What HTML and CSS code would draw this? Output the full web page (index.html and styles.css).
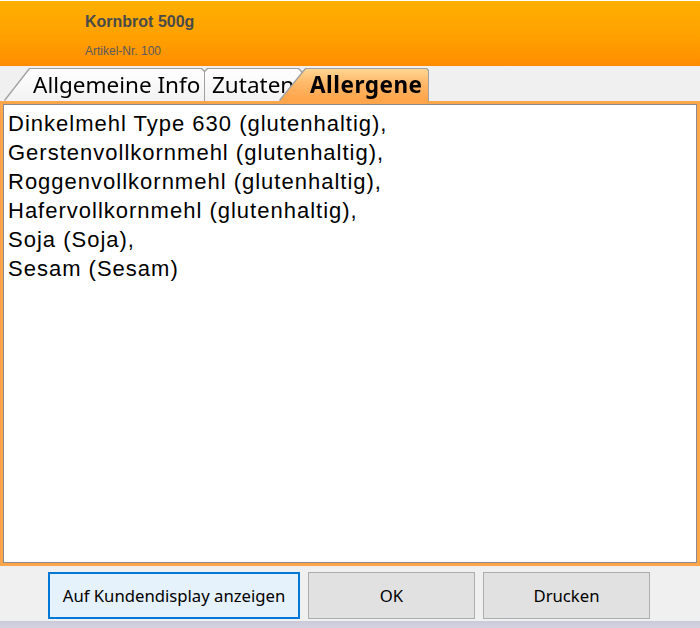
FILE: index.html
```html
<!DOCTYPE html>
<html lang="de">
<head>
<meta charset="utf-8">
<title>Kornbrot 500g</title>
<link rel="stylesheet" href="styles.css">
</head>
<body>
<div class="topline"></div>
<header class="header">
  <div class="title">Kornbrot 500g</div>
  <div class="subtitle">Artikel-Nr. 100</div>
</header>
<nav class="tabs">
  <div class="tab-wrap tab-wrap-1"><div class="tab tab-1">Allgemeine Info</div></div>
  <div class="tab-wrap tab-wrap-2"><div class="tab tab-2">Zutaten</div></div>
  <div class="tab-wrap tab-wrap-3"><div class="tab tab-3">Allergene</div></div>
</nav>
<main class="panel">
  <div class="panel-inner">
    <div class="line">Dinkelmehl Type 630 (glutenhaltig),</div>
    <div class="line">Gerstenvollkornmehl (glutenhaltig),</div>
    <div class="line">Roggenvollkornmehl (glutenhaltig),</div>
    <div class="line">Hafervollkornmehl (glutenhaltig),</div>
    <div class="line">Soja (Soja),</div>
    <div class="line">Sesam (Sesam)</div>
  </div>
</main>
<footer class="buttons">
  <button class="btn btn-focus btn-wide">Auf Kundendisplay anzeigen</button>
  <button class="btn">OK</button>
  <button class="btn">Drucken</button>
</footer>
<div class="bottomstrip"></div>
</body>
</html>
```
FILE: styles.css
```css
html, body {
  margin: 0;
  padding: 0;
}
body {
  width: 700px;
  height: 628px;
  overflow: hidden;
  background: #f0f0f0;
  font-family: "Liberation Sans", Arial, sans-serif;
}
.topline {
  height: 1px;
  background: #ffffff;
}
.header {
  height: 65px;
  box-sizing: border-box;
  padding: 12px 0 0 85px;
  background: linear-gradient(to bottom, #ffb000 0%, #ff9f00 60%, #ff8c00 100%);
}
.title {
  font-weight: bold;
  font-size: 16px;
  color: #4a4a4a;
  line-height: 18px;
}
.subtitle {
  margin-top: 13px;
  font-size: 12px;
  color: #5a5a5a;
  line-height: 14px;
}
.tabs {
  height: 35px;
  box-sizing: border-box;
  display: flex;
  align-items: flex-end;
  padding-left: 5px;
}
.tab-wrap {
  position: relative;
  filter: drop-shadow(1px 0 0 #a0a0a0) drop-shadow(-1px 0 0 #a0a0a0) drop-shadow(0 -1px 0 #a0a0a0);
}
.tab {
  height: 32px;
  box-sizing: border-box;
  font-family: "Noto Sans", "Open Sans", sans-serif;
  font-size: 22.5px;
  line-height: 31px;
  color: #000;
  white-space: nowrap;
  overflow: hidden;
}
.tab-wrap-1 { width: 199px; z-index: 1; }
.tab-1 {
  padding-left: 28px;
  background: linear-gradient(to bottom, #ffffff, #f2f2f2);
  clip-path: polygon(0 100%, 25px 0, calc(100% - 3px) 0, 100% 3px, 100% 100%);
}
.tab-wrap-2 { width: 96px; margin-left: 1px; z-index: 2; }
.tab-2 {
  padding-left: 7px;
  background: linear-gradient(to bottom, #ffffff, #f2f2f2);
  clip-path: polygon(0 3px, 3px 0, calc(100% - 3px) 0, 100% 3px, 100% 100%, 0 100%);
}
.tab-wrap-3 { width: 148px; margin-left: -21px; z-index: 3; }
.tab-3 {
  padding-left: 30px;
  font-weight: bold;
  letter-spacing: 0.5px;
  background: linear-gradient(to bottom, #ffd592 0%, #ffb565 50%, #ffa449 100%);
  clip-path: polygon(0 100%, 26px 0, calc(100% - 2px) 0, 100% 2px, 100% 100%);
}
.panel {
  height: 465px;
  box-sizing: border-box;
  border: 3px solid #ffa64d;
  background: #ffffff;
  box-shadow: inset 1px 1px 0 #8a8a8a, inset -1px -1px 0 #8a8a8a;
}
.panel-inner {
  padding: 5px 0 0 5px;
}
.line {
  font-family: "Liberation Sans", Arial, sans-serif;
  font-size: 22px;
  letter-spacing: 1px;
  line-height: 29px;
  color: #000;
}
.buttons {
  height: 54px;
  box-sizing: border-box;
  display: flex;
  gap: 8px;
  padding: 6px 0 0 48px;
}
.btn {
  width: 167px;
  height: 47px;
  box-sizing: border-box;
  border: 1px solid #adadad;
  background: #e1e1e1;
  font-family: "Noto Sans", "Open Sans", sans-serif;
  font-size: 16.7px;
  color: #000;
  padding: 0;
  margin: 0;
}
.btn-wide { width: 252px; }
.btn-focus {
  border: 2px solid #0078d7;
  background: #e5f1fb;
}
.bottomstrip {
  height: 8px;
  background: linear-gradient(to bottom, #f0f0f0 0, #f0f0f0 1px, #c9c9d9 1px, #d4d4e2 100%);
}
```
